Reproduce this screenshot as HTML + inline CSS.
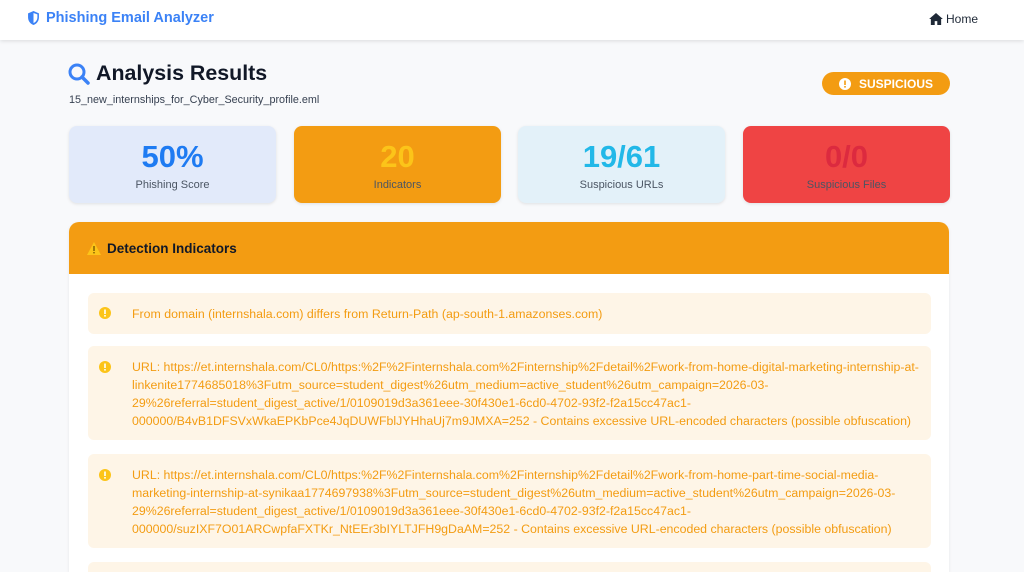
<!DOCTYPE html>
<html><head><meta charset="utf-8"><style>
*{box-sizing:border-box;margin:0;padding:0}
html,body{width:1024px;height:572px;overflow:hidden}
body{background:#f8f9fb;font-family:"Liberation Sans",Arial,sans-serif;position:relative}
.nav{position:absolute;left:0;top:0;width:1024px;height:40px;background:#fff;box-shadow:0 1px 4px rgba(0,0,0,.12)}
.brand{position:absolute;left:27px;top:10px;color:#3b82f6;font-weight:bold;font-size:14.5px;display:flex;align-items:center;gap:6px}
.home{position:absolute;left:929px;top:12px;color:#1f2937;font-size:12px;display:flex;align-items:center;gap:3px}
h1{position:absolute;left:67px;top:61px;font-size:21.4px;color:#111827;display:flex;align-items:center;gap:5px}
.fn{position:absolute;left:69px;top:94px;font-size:10.8px;color:#374151}
.badge{position:absolute;left:822px;top:72px;width:128px;height:23px;border-radius:12px;background:#f39c12;color:#fff;font-size:12px;font-weight:bold;display:flex;align-items:center;justify-content:center;gap:8px}
.card{position:absolute;top:126px;height:77px;width:207px;border-radius:8px;text-align:center;box-shadow:0 1px 3px rgba(0,0,0,.1)}
.card b{display:block;font-size:31px;margin-top:14px;line-height:34px}
.card span{display:block;font-size:11px;color:#4b5563;margin-top:5px}
.panel{position:absolute;left:69px;top:222px;width:880px;height:350px;background:#fff;border-radius:10px 10px 0 0;overflow:hidden;box-shadow:0 1px 3px rgba(0,0,0,.08)}
.ph{height:52px;background:#f39c12;display:flex;align-items:center;padding-left:18px;gap:6px;font-weight:bold;font-size:13.5px;color:#111827}
.item{position:absolute;left:19px;width:843px;background:#fef5e7;border-radius:6px;color:#f39c12;font-size:12.35px;line-height:18px;padding:12px 6px 9px 44px;white-space:nowrap}
.item svg{position:absolute;left:11px;top:15px}
</style></head><body>
<div class="nav">
<div class="brand"><svg width="13" height="14" viewBox="0 0 16 18"><path d="M8 0L1 3v5c0 5 3 8.5 7 10 4-1.5 7-5 7-10V3z" fill="#3b82f6"/><path d="M8 2.5v13c3-1.3 5-4 5-7.5V4.3z" fill="#fff"/></svg>Phishing Email Analyzer</div>
<div class="home"><svg width="14" height="12" viewBox="0 0 16 14"><path d="M8 0L0 7h2v7h4.5V9.5h3V14H14V7h2z" fill="#1f2937"/></svg>Home</div>
</div>
<h1><svg width="24" height="24" viewBox="0 0 24 24"><circle cx="10" cy="10" r="7" fill="none" stroke="#3b82f6" stroke-width="3"/><path d="M15 15l6 6" stroke="#3b82f6" stroke-width="3.5" stroke-linecap="round"/></svg>Analysis Results</h1>
<div class="fn">15_new_internships_for_Cyber_Security_profile.eml</div>
<div class="badge"><svg width="12" height="12" viewBox="0 0 12 12"><circle cx="6" cy="6" r="6" fill="#fff"/><rect x="5.2" y="2.5" width="1.6" height="4.5" fill="#f39c12"/><rect x="5.2" y="8" width="1.6" height="1.6" fill="#f39c12"/></svg>SUSPICIOUS</div>
<div class="card" style="left:69px;background:#e2eafa"><b style="color:#1e7bf2">50%</b><span>Phishing Score</span></div>
<div class="card" style="left:294px;background:#f39c12"><b style="color:#fcc419">20</b><span>Indicators</span></div>
<div class="card" style="left:518px;background:#e3f1f9"><b style="color:#22b8e8">19/61</b><span>Suspicious URLs</span></div>
<div class="card" style="left:743px;background:#ef4444"><b style="color:#dc2a3f">0/0</b><span>Suspicious Files</span></div>
<div class="panel">
<div class="ph"><svg width="14" height="13" viewBox="0 0 14 13"><path d="M7 0L14 13H0z" fill="#fcc419"/><rect x="6.3" y="4" width="1.4" height="5" fill="#7a5a00"/><rect x="6.3" y="10" width="1.4" height="1.4" fill="#7a5a00"/></svg>Detection Indicators</div>
<div class="item" style="top:71px;height:41px;padding-top:12px"><svg width="12" height="12" viewBox="0 0 12 12" style="top:14px"><circle cx="6" cy="6" r="6" fill="#fcc419"/><rect x="5.2" y="2.5" width="1.6" height="4.5" fill="#fff"/><rect x="5.2" y="8" width="1.6" height="1.6" fill="#fff"/></svg>From domain (internshala.com) differs from Return-Path (ap-south-1.amazonses.com)</div>
<div class="item" style="top:124px;height:94px"><svg width="12" height="12" viewBox="0 0 12 12"><circle cx="6" cy="6" r="6" fill="#fcc419"/><rect x="5.2" y="2.5" width="1.6" height="4.5" fill="#fff"/><rect x="5.2" y="8" width="1.6" height="1.6" fill="#fff"/></svg>URL: https://et.internshala.com/CL0/https:%2F%2Finternshala.com%2Finternship%2Fdetail%2Fwork-from-home-digital-marketing-internship-at-<br>linkenite1774685018%3Futm_source=student_digest%26utm_medium=active_student%26utm_campaign=2026-03-<br>29%26referral=student_digest_active/1/0109019d3a361eee-30f430e1-6cd0-4702-93f2-f2a15cc47ac1-<br>000000/B4vB1DFSVxWkaEPKbPce4JqDUWFblJYHhaUj7m9JMXA=252 - Contains excessive URL-encoded characters (possible obfuscation)</div>
<div class="item" style="top:232px;height:94px"><svg width="12" height="12" viewBox="0 0 12 12"><circle cx="6" cy="6" r="6" fill="#fcc419"/><rect x="5.2" y="2.5" width="1.6" height="4.5" fill="#fff"/><rect x="5.2" y="8" width="1.6" height="1.6" fill="#fff"/></svg>URL: https://et.internshala.com/CL0/https:%2F%2Finternshala.com%2Finternship%2Fdetail%2Fwork-from-home-part-time-social-media-<br>marketing-internship-at-synikaa1774697938%3Futm_source=student_digest%26utm_medium=active_student%26utm_campaign=2026-03-<br>29%26referral=student_digest_active/1/0109019d3a361eee-30f430e1-6cd0-4702-93f2-f2a15cc47ac1-<br>000000/suzIXF7O01ARCwpfaFXTKr_NtEEr3bIYLTJFH9gDaAM=252 - Contains excessive URL-encoded characters (possible obfuscation)</div>
<div class="item" style="top:340px;height:40px"></div>
</div>
</body></html>
